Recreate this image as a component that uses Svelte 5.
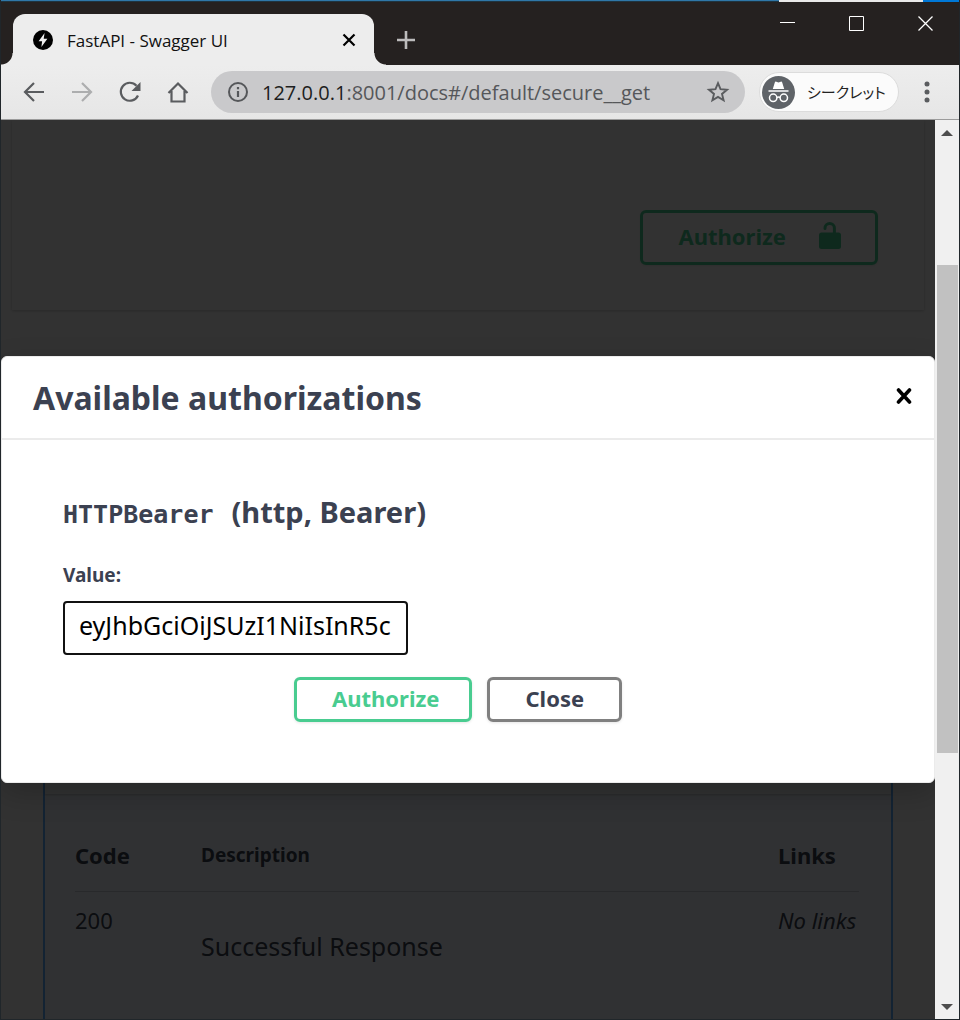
<script>
  let token = $state('eyJhbGciOiJSUzI1NiIsInR5cCI6IkpXVCJ9');
  const responses = [{ code: 200, description: 'Successful Response', links: 'No links' }];
</script>

<div class="window">
  <div class="edge"><i class="pale"></i><i class="accent"></i></div>

  <header class="titlebar">
    <div class="tab">
      <svg class="favicon" viewBox="0 0 20 20" aria-hidden="true">
        <circle cx="10" cy="10" r="10" fill="#000" />
        <path d="M11.6 3 5.6 11.2h3.5L8.4 17l6-8.2h-3.7z" fill="#eee" />
      </svg>
      <span class="tab-title">FastAPI - Swagger UI</span>
      <button class="tab-close" aria-label="Close tab">
        <svg width="14" height="14" viewBox="0 0 14 14"><path d="M1.5 1.5l11 11M12.5 1.5l-11 11" stroke="#000" stroke-width="2.2" /></svg>
      </button>
    </div>
    <button class="new-tab" aria-label="New tab">
      <svg width="18" height="18" viewBox="0 0 18 18"><path d="M9 0v18M0 9h18" stroke="#bdbcbc" stroke-width="2.6" /></svg>
    </button>
    <div class="controls">
      <button aria-label="Minimize"><svg width="15" height="15" viewBox="0 0 15 15"><path d="M0 6.5h15" stroke="#fff" /></svg></button>
      <button aria-label="Maximize"><svg width="15" height="15" viewBox="0 0 15 15"><path d="M.5.5h14v14H.5z" stroke="#fff" fill="none" /></svg></button>
      <button aria-label="Close window"><svg width="15" height="15" viewBox="0 0 15 15"><path d="M.5.5l14 14M14.5.5l-14 14" stroke="#fff" stroke-width="1.3" /></svg></button>
    </div>
  </header>

  <nav class="toolbar">
    <button aria-label="Back">
      <svg width="24" height="24" viewBox="0 0 24 24"><path d="M22 12H3.5M12 3l-9 9 9 9" class="line" /></svg>
    </button>
    <button aria-label="Forward" class="off">
      <svg width="24" height="24" viewBox="0 0 24 24"><path d="M2 12h18.500M12 3l9 9-9 9" class="line" /></svg>
    </button>
    <button aria-label="Reload">
      <svg width="24" height="24" viewBox="0 0 24 24"><path d="M20 15.500A9 9 0 1 1 18.500 5.700" class="line" /><path d="M22.500 2v9h-9z" fill="#5a5c5f" /></svg>
    </button>
    <button aria-label="Home">
      <svg width="24" height="24" viewBox="0 0 24 24"><path d="M2.500 13 12 3.500l9.500 9.500M5.500 11v10.500h13V11" class="line" /></svg>
    </button>
    <div class="address">
      <svg width="22" height="22" viewBox="0 0 22 22" aria-hidden="true"><circle cx="11" cy="11" r="9" fill="none" stroke="#55575a" stroke-width="2" /><path d="M11 10v6M11 6v2.200" stroke="#55575a" stroke-width="2.200" /></svg>
      <span class="url"><b>127.0.0.1</b>:8001/docs#/default/secure__get</span>
      <button aria-label="Bookmark this page">
        <svg width="24" height="24" viewBox="0 0 24 24"><path d="M12 3.200l2.500 6 6.500.5-5 4.200 1.600 6.400L12 16.900l-5.600 3.400L8 13.900l-5-4.200 6.500-.5z" fill="none" stroke="#5a5c5f" stroke-width="1.900" /></svg>
      </button>
    </div>
    <div class="profile">
      <svg width="33" height="33" viewBox="0 0 33 33" aria-hidden="true">
        <circle cx="16.500" cy="16.500" r="16.500" fill="#5f6368" />
        <path d="M12.800 6.500q.4-1.200 1.500-.8l2.200.7 2.200-.7q1.100-.4 1.500.8l2 6.500H10.800zM6.500 14.200h20v1.600h-20z" fill="#fff" />
        <g fill="none" stroke="#fff" stroke-width="1.500"><circle cx="11.200" cy="21.800" r="3.700" /><circle cx="21.800" cy="21.800" r="3.700" /><path d="M14.900 21.500q1.600-1 3.200 0" /></g>
      </svg>
      <span>シークレット</span>
    </div>
    <button class="menu" aria-label="Menu">
      <svg width="6" height="22" viewBox="0 0 6 22" fill="#5a5c5f"><circle cx="3" cy="3" r="2.500" /><circle cx="3" cy="11" r="2.500" /><circle cx="3" cy="19" r="2.500" /></svg>
    </button>
  </nav>

  <div class="viewport">
    <main class="page">
      <section class="scheme">
        <button class="btn green">
          Authorize
          <svg width="22" height="28" viewBox="0 0 22 28"><path d="M6 6.600V6.200a4.700 4.700 0 0 1 9.400 0V12" fill="none" stroke="#49cc90" stroke-width="3" stroke-linecap="round" /><rect y="10.500" width="22" height="16.500" rx="2.500" fill="#49cc90" /></svg>
        </button>
      </section>
      <section class="operation">
        <div class="summary"></div>
        <table>
          <thead><tr><th class="code">Code</th><th class="desc">Description</th><th class="links">Links</th></tr></thead>
          <tbody>
            {#each responses as r}
              <tr><td>{r.code}</td><td class="text">{r.description}</td><td><em>{r.links}</em></td></tr>
            {/each}
          </tbody>
        </table>
      </section>

      <div class="backdrop">
        <div class="modal" role="dialog" aria-labelledby="dialog-title">
          <div class="modal-head">
            <h3 id="dialog-title">Available authorizations</h3>
            <button class="dismiss" aria-label="Close dialog">
              <svg width="16" height="16" viewBox="0 0 16 16"><path d="M2.500 2l11 12M13.500 2l-11 12" stroke="#000" stroke-width="3.600" stroke-linecap="round" /></svg>
            </button>
          </div>
          <form class="modal-body" onsubmit={(e) => e.preventDefault()}>
            <h4><code>HTTPBearer</code><span>(http, Bearer)</span></h4>
            <label for="token">Value:</label>
            <input id="token" type="text" bind:value={token} />
            <div class="actions">
              <button type="submit" class="btn green">Authorize</button>
              <button type="button" class="btn">Close</button>
            </div>
          </form>
        </div>
      </div>
    </main>
    <div class="scrollbar">
      <i class="up"></i>
      <i class="before"></i><i class="thumb"></i><i class="after"></i>
      <i class="down"></i>
    </div>
  </div>
</div>

<style>
  :global(body) { margin: 0; }
  .window, .window * { box-sizing: border-box; }
  .window {
    min-height: 100vh;
    display: flex;
    flex-direction: column;
    background: #252120;
    border: solid #20262a;
    border-width: 0 1px 1px;
    font-family: "Noto Sans", "Noto Sans CJK JP", sans-serif;
    color: #3b4151;
  }
  button { font: inherit; color: inherit; background: none; border: 0; padding: 0; display: flex; align-items: center; justify-content: center; }
  svg { display: block; flex: none; }

  .edge { height: 2px; display: flex; justify-content: flex-end; background: linear-gradient(#2f77a8 50%, #1f3440 50%); }
  .pale { width: 15%; background: #e9e9e9; }
  .accent { width: 36px; background: #0078d7; }

  .titlebar { display: flex; height: 63px; padding-left: 12px; align-items: flex-end; }
  .tab {
    position: relative;
    flex: 0 1 361px;
    height: 51px;
    display: flex;
    align-items: center;
    padding: 0 18px 0 20px;
    background: #ededed;
    border-radius: 12px 12px 0 0;
    font: 17px/24px "Open Sans", sans-serif;
    color: #111;
  }
  .tab::before, .tab::after { content: ""; position: absolute; bottom: 0; width: 12px; height: 12px; }
  .tab::before { right: 100%; background: radial-gradient(circle at 0 0, #252120 11px, #ededed 12px); }
  .tab::after { left: 100%; background: radial-gradient(circle at 100% 0, #252120 11px, #ededed 12px); }
  .favicon { width: 20px; height: 20px; margin-right: 14px; }
  .tab-title { flex: 1; padding-top: 2px; white-space: nowrap; }
  .new-tab { width: 40px; height: 51px; margin-left: 12px; }
  .controls { display: flex; margin: 0 -1px 0 auto; align-self: flex-start; }
  .controls button { width: 69px; height: 43px; }

  .toolbar {
    display: flex;
    align-items: center;
    height: 55px;
    padding: 0 14px 0 21px;
    gap: 24px;
    background: linear-gradient(#ededed, #e6e6e6);
    border-bottom: 1px solid #9b9b9b;
  }
  .line { fill: none; stroke: #5a5c5f; stroke-width: 2.2; }
  .off { opacity: .42; }
  .address {
    flex: 1;
    min-width: 0;
    display: flex;
    align-items: center;
    height: 42px;
    margin-left: -3px;
    padding: 0 15px 0 16px;
    border-radius: 21px;
    background: #c9c9cb;
    font: 20px/28px "Open Sans", sans-serif;
    color: #55575a;
  }
  .url { flex: 1; margin-left: 13px; padding-top: 2px; white-space: nowrap; overflow: hidden; }
  .url b { font-weight: 400; color: #1d1e20; }
  .profile {
    display: flex;
    align-items: center;
    gap: 12px;
    width: 140px;
    height: 40px;
    margin-left: -10px;
    padding: 0 2px;
    border: 1px solid #dcdcdc;
    border-radius: 20px;
    background: #fbfbfb;
    font: 15px/24px "Noto Sans CJK JP", sans-serif;
    font-feature-settings: "palt";
    color: #222;
    white-space: nowrap;
  }
  .menu { width: 36px; margin-left: -14px; margin-right: 0; }

  .viewport { flex: 1; display: flex; }
  .page { position: relative; flex: 1; min-width: 0; overflow: hidden; background: #fafafa; display: flex; flex-direction: column; }
  .scheme {
    display: flex;
    justify-content: flex-end;
    margin: 0 11px;
    padding: 90px 46px 45px;
    background: #fbfbfb;
    box-shadow: 0 1px 3px rgba(0, 0, 0, .2);
  }
  .btn {
    height: 45px;
    padding: 0 35px 4px;
    border: 3px solid gray;
    border-radius: 6px;
    box-shadow: 0 1px 3px rgba(0, 0, 0, .1);
    font-weight: 700;
    font-size: 22px;
    line-height: 30px;
  }
  .green { padding-right: 30px; border-color: #49cc90; color: #49cc90; }
  .scheme .btn { height: 55px; padding-right: 34px; gap: 33px; }
  .operation {
    flex: 1;
    margin: 70px 42px 0;
    border: solid #61affe;
    border-width: 2px 2px 0;
    background: #eff6fe;
  }
  .summary { height: 412px; background: #f6f8fb; box-shadow: 0 1px 2px rgba(0, 0, 0, .2); }
  table { width: calc(100% - 62px); margin: 30px 32px 0 30px; border-collapse: collapse; table-layout: fixed; }
  th { height: 67px; padding: 0 0 4px; text-align: left; font-size: 22px; line-height: 30px; border-bottom: 1px solid #c5cad4; }
  th.code { width: 126px; }
  th.desc { font-size: 19px; }
  th.links { width: 81px; }
  td { padding: 13px 0 0; vertical-align: top; font-size: 22px; line-height: 30px; white-space: nowrap; }
  td.text { padding-top: 39px; font-size: 25px; }

  .backdrop { position: absolute; inset: 0; display: flex; align-items: center; background: rgba(0, 0, 0, .8); }
  .modal {
    flex: 1;
    border: 1px solid #ebebeb;
    border-radius: 6px;
    background: #fff;
    box-shadow: 0 10px 30px rgba(0, 0, 0, .2);
  }
  .modal-head { display: flex; align-items: center; justify-content: space-between; height: 83px; padding: 0 22px 0 31px; border-bottom: 2px solid #ebebeb; }
  .dismiss { padding-bottom: 4px; }
  h3 { margin: 0; font-size: 32px; line-height: 44px; }
  .modal-body { padding: 52px 61px 60px; }
  h4 { display: flex; align-items: baseline; gap: 18px; margin: 0 0 26px; font-size: 29px; line-height: 40px; }
  code { font: 700 25px/40px "DejaVu Sans Mono", monospace; }
  label { display: block; margin-bottom: 12px; font-size: 19px; font-weight: 700; line-height: 28px; }
  input {
    display: block;
    width: 345px;
    max-width: 100%;
    height: 54px;
    padding: 0 15px 6px 14px;
    border: 2px solid #111;
    border-radius: 4px;
    font: 25px/32px "Noto Sans", sans-serif;
    color: #000;
    outline: 0;
  }
  .actions { display: flex; justify-content: center; gap: 15px; margin: 22px 20px 0 0; }

  .scrollbar { display: flex; flex-direction: column; align-items: center; width: 24px; padding: 10px 0 9px; background: #f0f0f0; }
  .up, .down { border: solid transparent; border-width: 0 6px; }
  .up { border-bottom: 6px solid #4d4d4d; margin-bottom: 8px; }
  .down { border-top: 6px solid #4d4d4d; margin-top: 8px; }
  .before { flex: 121; }
  .thumb { flex: 489; width: 21px; background: #c1c1c1; }
  .after { flex: 243; }
</style>
